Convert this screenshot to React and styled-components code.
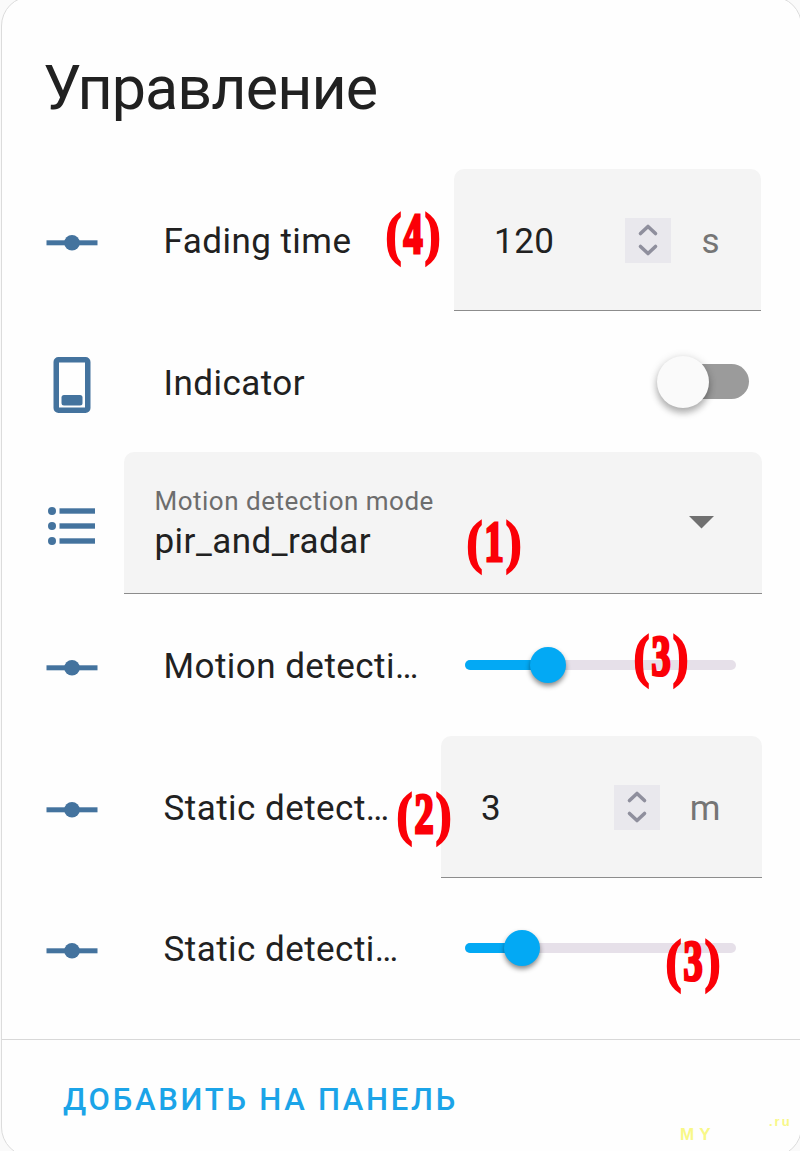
import React from "react";
import styled, { createGlobalStyle } from "styled-components";

const Global = createGlobalStyle`
  * { box-sizing: border-box; }
  body { margin: 0; background: #fafafa; font-family: Roboto, "Liberation Sans", sans-serif; color: #212121; }
`;
const Page = styled.div`
  position: relative;
  height: 1151px;
  overflow: hidden;
  display: flex;
`;
const Card = styled.section`
  flex: none;
  width: 801px;
  height: 1161px;
  margin-top: -4px;
  margin-left: 1px;
  display: flex;
  flex-direction: column;
  background: #fefefe;
  border: 1px solid #dcdcdc;
  border-radius: 30px;
`;
const Title = styled.h1`
  margin: 0;
  height: 172px;
  padding: 51px 0 0 41px;
  font-size: 61px;
  font-weight: 400;
  line-height: 80px;
  letter-spacing: -0.9px;
`;
const Rows = styled.div`
  display: grid;
  grid-template-rows: repeat(6, 141.7px);
  padding: 0 39px 0 44px;
`;
const Row = styled.div`
  display: flex;
  align-items: center;
  min-width: 0;
`;
const IconSlot = styled.div`
  flex: none;
  width: ${(p) => (p.$narrow ? 78 : 117.5)}px;
  padding-top: ${(p) => p.$drop || 6}px;
  svg { display: block; fill: #44739e; }
`;
const Label = styled.div`
  flex: none;
  width: ${(p) => p.$width}px;
  overflow: hidden;
  white-space: nowrap;
  text-overflow: ellipsis;
  font-size: 35px;
  line-height: 50px;
  letter-spacing: 0.46px;
  padding-top: 4px;
`;
const NumberField = styled.div`
  flex: none;
  width: ${(p) => p.$width}px;
  height: 142px;
  margin-left: auto;
  margin-right: ${(p) => p.$inset || 0}px;
  padding: 2px 41px 0 40px;
  display: flex;
  align-items: center;
  background: #f4f4f4;
  border-bottom: 1.5px solid #8c8c8c;
  border-radius: 10px 10px 0 0;
  font-size: 35px;
  letter-spacing: 0.5px;
`;
const Value = styled.span`
  flex: 1;
  padding-top: 2px;
`;
const Stepper = styled.span`
  width: 46px;
  height: 45px;
  display: grid;
  place-items: center;
  background: #e9e8ed;
  svg { fill: none; stroke: #8f8f9d; stroke-width: 3.6; stroke-linecap: round; stroke-linejoin: round; }
`;
const Unit = styled.span`
  margin-left: 30px;
  padding-top: 2px;
  color: #757575;
`;
const Switch = styled.div`
  width: 88px;
  height: 35px;
  margin-left: auto;
  margin-right: 13px;
  display: flex;
  align-items: center;
  background: #9b9b9b;
  border-radius: 18px;
`;
const Knob = styled.span`
  flex: none;
  width: 52px;
  height: 52px;
  margin-left: -4px;
  border-radius: 50%;
  background: #fafafa;
  box-shadow: 0 5px 7px rgba(0, 0, 0, 0.26), 0 1px 10px rgba(0, 0, 0, 0.14);
`;
const Select = styled.div`
  flex: 1;
  height: 142px;
  padding: 0 48px 0 30.5px;
  display: flex;
  align-items: center;
  justify-content: space-between;
  background: #f4f4f4;
  border-bottom: 1.5px solid #8c8c8c;
  border-radius: 10px 10px 0 0;
  svg { fill: #707070; }
`;
const SelectText = styled.div`
  display: flex;
  flex-direction: column;
  padding-top: 3px;
`;
const SelectLabel = styled.span`
  font-size: 26px;
  line-height: 34px;
  letter-spacing: 0.5px;
  color: #6d6d6d;
`;
const SelectValue = styled.span`
  font-size: 35px;
  line-height: 47px;
  letter-spacing: 0.46px;
`;
const Track = styled.div`
  width: 271px;
  height: 10px;
  margin-left: auto;
  margin-right: 26px;
  display: flex;
  align-items: center;
  background: #e6e0e9;
  border-radius: 5px;
`;
const Fill = styled.span`
  height: 10px;
  background: #03a9f4;
  border-radius: 5px 0 0 5px;
`;
const Thumb = styled.span`
  flex: none;
  width: 36px;
  height: 36px;
  margin-left: -18px;
  border-radius: 50%;
  background: #03a9f4;
  box-shadow: 0 3px 5px rgba(0, 0, 0, 0.45);
`;
const Footer = styled.footer`
  flex: 1;
  margin-top: 20px;
  border-top: 1px solid #d8d8d8;
  padding: 40px 0 0 61px;
`;
const AddButton = styled.button`
  padding: 0;
  border: 0;
  background: none;
  font: 500 31px/40px Roboto, sans-serif;
  letter-spacing: 2.75px;
  text-transform: uppercase;
  color: #1ba4e8;
`;
const CalloutBox = styled.span`
  position: absolute;
  left: ${(p) => p.$x}px;
  top: ${(p) => p.$y}px;
  width: 56px;
  height: 56px;
  display: flex;
  align-items: center;
  justify-content: center;
  font: 700 57px/56px "Liberation Serif", serif;
  color: #fb0007;
  -webkit-text-stroke: 2.4px #fb0007;
  transform: scaleX(0.82);
`;
const Digit = styled.span`
  transform: scaleX(0.82);
  -webkit-text-stroke-width: 3.2px;
`;
const Watermark = styled.span`
  position: absolute;
  left: ${(p) => p.$x}px;
  top: ${(p) => p.$y}px;
  font: 700 ${(p) => p.$size}px/1 "Liberation Sans", sans-serif;
  letter-spacing: ${(p) => p.$gap}px;
  color: #f8f888;
`;

const Callout = ({ x, y, n }) => (
  <CalloutBox $x={x} $y={y}>
    <span>(</span>
    <Digit>{n}</Digit>
    <span>)</span>
  </CalloutBox>
);
const SliderIcon = () => (
  <svg width="52" height="18" viewBox="0 0 52 18">
    <rect x="0.5" y="6.3" width="51" height="5" />
    <circle cx="26" cy="8.8" r="7.800" />
  </svg>
);
const DeviceIcon = () => (
  <svg width="52" height="56" viewBox="0 0 52 56">
    <path fillRule="evenodd" d="M12.500 0h27a5 5 0 0 1 5 5v46a5 5 0 0 1-5 5h-27a5 5 0 0 1-5-5V5a5 5 0 0 1 5-5zm.5 5.500v45h26v-45z" />
    <rect x="15.500" y="38" width="21" height="10.500" rx="2.500" />
  </svg>
);
const ListIcon = () => (
  <svg width="52" height="40" viewBox="0 0 52 40">
    {[5, 20, 35].map((y) => (
      <g key={y}>
        <circle cx="6" cy={y} r="4" />
        <rect x="13.500" y={y - 2.7} width="35.500" height="5.400" />
      </g>
    ))}
  </svg>
);
const Arrows = () => (
  <Stepper>
    <svg width="22" height="32" viewBox="0 0 22 32">
      <path d="M3.500 9.500 11 2.500l7.500 7M3.500 22.500l7.500 7 7.500-7" />
    </svg>
  </Stepper>
);
const NumberRow = ({ label, labelWidth, value, unit, width, inset }) => (
  <Row>
    <IconSlot><SliderIcon /></IconSlot>
    <Label $width={labelWidth}>{label}</Label>
    <NumberField $width={width} $inset={inset}>
      <Value>{value}</Value>
      <Arrows />
      <Unit>{unit}</Unit>
    </NumberField>
  </Row>
);
const SliderRow = ({ label, labelWidth, position }) => (
  <Row>
    <IconSlot><SliderIcon /></IconSlot>
    <Label $width={labelWidth}>{label}</Label>
    <Track>
      <Fill style={{ width: position }} />
      <Thumb />
    </Track>
  </Row>
);

export default function App() {
  return (
    <Page>
      <Global />
      <Card>
        <Title>Управление</Title>
        <Rows>
          <NumberRow label="Fading time" labelWidth={220} value="120" unit="s" width={307} inset={1} />
          <Row>
            <IconSlot><DeviceIcon /></IconSlot>
            <Label $width={300}>Indicator</Label>
            <Switch><Knob /></Switch>
          </Row>
          <Row>
            <IconSlot $narrow><ListIcon /></IconSlot>
            <Select>
              <SelectText>
                <SelectLabel>Motion detection mode</SelectLabel>
                <SelectValue>pir_and_radar</SelectValue>
              </SelectText>
              <svg width="25" height="13" viewBox="0 0 25 13"><path d="M0 0h25L12.500 12.500z" /></svg>
            </Select>
          </Row>
          <SliderRow label="Motion detection sensitivity" labelWidth={260} position={83} />
          <NumberRow label="Static detection distance" labelWidth={230} value="3" unit="m" width={321} />
          <SliderRow label="Static detection sensitivity" labelWidth={246} position={57} />
        </Rows>
        <Footer><AddButton>Добавить на панель</AddButton></Footer>
      </Card>
      <Callout x={385} y={206} n="4" />
      <Callout x={466} y={514} n="1" />
      <Callout x={633} y={628} n="3" />
      <Callout x={396} y={786} n="2" />
      <Callout x={665} y={933} n="3" />
      <Watermark $x={680} $y={1126} $size={17} $gap={5}>MY</Watermark>
      <Watermark $x={769} $y={1115} $size={13} $gap={2}>.ru</Watermark>
    </Page>
  );
}
